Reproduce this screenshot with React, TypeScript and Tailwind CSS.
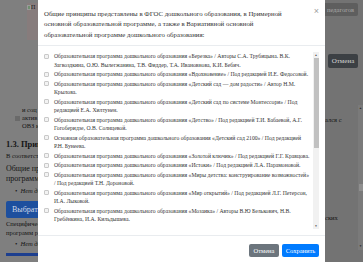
const programs: string[][] = [
  [
    "Образовательная программа дошкольного образования «Березка» / Авторы С.А. Трубицына. В.К.",
    "Загвоздкина, О.Ю. Вылегжанина, Т.В. Фиддер, Т.А. Ивановнова, К.И. Бебич.",
  ],
  ["Образовательная программа дошкольного образования «Вдохновение» / Под редакцией И.Е. Федосовой."],
  ["Образовательная программа дошкольного образования «Детский сад — дом радости» / Автор Н.М.", "Крылова."],
  [
    "Образовательная программа дошкольного образования «Детский сад по системе Монтессори» / Под",
    "редакцией Е.А. Хилтунен.",
  ],
  [
    "Образовательная программа дошкольного образования «Детство» / Под редакцией Т.И. Бабаевой, А.Г.",
    "Гогоберидзе, О.В. Солнцевой.",
  ],
  [
    "Основная образовательная программа дошкольного образования «Детский сад 2100» / Под редакцией",
    "Р.Н. Бунеева.",
  ],
  ["Образовательная программа дошкольного образования «Золотой ключик» / Под редакцией Г.Г. Кравцова."],
  ["Образовательная программа дошкольного образования «Истоки» / Под редакцией Л.А. Парамоновой."],
  [
    "Образовательная программа дошкольного образования «Миры детства: конструирование возможностей»",
    "/ Под редакцией Т.Н. Дороновой.",
  ],
  [
    "Образовательная программа дошкольного образования «Мир открытий» / Под редакцией Л.Г. Петерсон,",
    "И.А. Лыковой.",
  ],
  [
    "Образовательная программа дошкольного образования «Мозаика» / Авторы В.Ю Белькович, Н.В.",
    "Гребёнкина, И.А. Кильдышева.",
  ],
];

function PageBehind() {
  return (
    <div className="flex h-full">
      {/* visible strip of the page on the left */}
      <div className="w-[38px] shrink-0 overflow-hidden bg-[#7f7f7f] text-[#151515]">
        <div className="ml-[27px] mt-[3px] h-[37px] w-[11px] bg-[#877c7c] text-[6px] leading-[8px]">
          <span className="inline-block h-[5px] w-[4px] border border-[#9a9a9a] bg-[#6f8f6f] align-middle" />П
        </div>
        <div className="mt-[66px] pl-[22px] text-[6.5px] leading-[8px] whitespace-nowrap">
          <p>и соц</p>
          <div className="-ml-[7px] flex items-center gap-[2px]">
            <span className="h-[5px] w-[5px] bg-[#6a6a6a]" />
            <span>актив</span>
          </div>
          <p>ОВЗ и</p>
        </div>
        <div className="mt-[9px] px-[6px] whitespace-nowrap">
          <h3 className="text-[8.5px] font-bold leading-[10px]">1.3. Принц</h3>
          <p className="mt-[3px] text-[6.5px] leading-[8px]">В соответстви</p>
          <p className="mt-[4px] text-[8px] leading-[9.5px]">Общие при</p>
          <p className="text-[8px] leading-[9.5px]">программе,</p>
          <p className="mt-[4px] pl-[9px] text-[6.5px] italic leading-[8px]">•&nbsp; Нет да</p>
          <div className="mt-[6px] w-[80px] rounded-[2px] bg-[#1d4f9e] py-[4px] pl-[6px] text-[8px] leading-[9px] text-[#cfd8e8]">
            Выбрать с
          </div>
          <p className="mt-[2px] text-[6.5px] leading-[8.5px]">Специфическ</p>
          <p className="text-[6.5px] leading-[8.5px]">программ раз</p>
          <p className="mt-[3px] pl-[9px] text-[6.5px] italic leading-[8px]">•&nbsp; Нет да</p>
          <div className="mt-[5px] h-[3px] w-[60px] bg-[#1d3f8f]" />
        </div>
      </div>
      {/* area under the dialog */}
      <div className="flex-1 bg-[#7f7f7f]" />
      {/* right side of the parent dialog */}
      <div className="flex w-[38px] shrink-0 overflow-hidden bg-[#737373]">
        <div className="w-[33px] whitespace-nowrap text-[6.5px] leading-[8px] text-[#151515]">
          <div className="mt-[3px] rounded-r-[2px] bg-[#5e5e5e] py-[2.5px] pl-[2px] text-[#a9a9a9]">педагогов</div>
          <div className="ml-[3px] mt-[38px] w-[30px] rounded-[2px] bg-[#3c4044] py-[3px] text-center text-[7px] text-[#d4d4d4]">
            Отмена
          </div>
          <p className="mt-[48px]">ался с</p>
          <p className="mt-[90px]">ских</p>
        </div>
        <div className="mt-[105px] flex h-[145px] w-[5px] flex-col items-center bg-[#7a7a7a]">
          <span className="mt-[2px] text-[3px] leading-[3px] text-[#2a2a2a]">▲</span>
          <div className="mt-[74px] h-[7px] w-[4px] bg-[#8f8f8f]" />
          <div className="flex-1" />
          <span className="mb-[2px] text-[3px] leading-[3px] text-[#2a2a2a]">▼</span>
        </div>
      </div>
    </div>
  );
}

function ListScrollbar() {
  return (
    <div className="flex w-[6px] shrink-0 flex-col items-center bg-[#f1f1f1]">
      <span className="mt-[1px] text-[3px] leading-[4px] text-[#505050]">▲</span>
      <div className="mt-[1px] h-[90px] w-[5px] bg-[#c1c1c1]" />
      <div className="flex-1" />
      <span className="mb-[1px] text-[3px] leading-[4px] text-[#505050]">▼</span>
    </div>
  );
}

export default function App() {
  return (
    <div className="relative h-[262px] w-[363px] overflow-hidden font-['Liberation_Serif',serif]">
      <PageBehind />

      {/* modal dialog */}
      <div className="absolute left-[38px] top-0 flex w-[287px] flex-col bg-white text-[#333333]">
        <div className="relative h-[46px] shrink-0 border-b border-[#e9ecef] pl-[6px] pr-[24px] pt-[8.5px]">
          <p className="text-[6.8px] leading-[10.5px] text-[#333333]">
            Общие принципы представлены в ФГОС дошкольного образования, в Примерной основной образовательной
            программе, а также в Вариативной основной образовательной программе дошкольного образования:
          </p>
          <span className="absolute right-[6px] top-[6px] font-['Liberation_Sans',sans-serif] text-[9px] leading-[10px] text-[#a0a0a0]">
            ×
          </span>
        </div>

        <div className="h-[189px] shrink-0 px-[6px] py-[6px]">
          <div className="flex h-full">
            <ul className="flex min-w-0 flex-1 flex-col gap-[1px] overflow-hidden pr-[1px]">
              {programs.map((lines) => (
                <li key={lines[0]} className="flex shrink-0 items-start gap-[5px]">
                  <span className="mt-[1.5px] h-[5px] w-[5px] shrink-0 rounded-[1px] border border-[#c9c9c9] bg-[#f3f3f3]" />
                  <span className="whitespace-nowrap text-[5.7px] leading-[8.5px]">
                    {lines.map((l, i) => (
                      <span key={i} className="block">
                        {l}
                      </span>
                    ))}
                  </span>
                </li>
              ))}
            </ul>
            <ListScrollbar />
          </div>
        </div>

        <div className="flex shrink-0 justify-end gap-[3px] border-t border-[#e9ecef] px-[6px] pb-[8px] pt-[8px] text-[6.5px] leading-[13px] text-white">
          <button className="h-[13px] w-[30px] rounded-[2px] bg-[#6c757d]">Отмена</button>
          <button className="h-[13px] w-[37px] rounded-[2px] bg-[#007bff]">Сохранить</button>
        </div>
      </div>
    </div>
  );
}
